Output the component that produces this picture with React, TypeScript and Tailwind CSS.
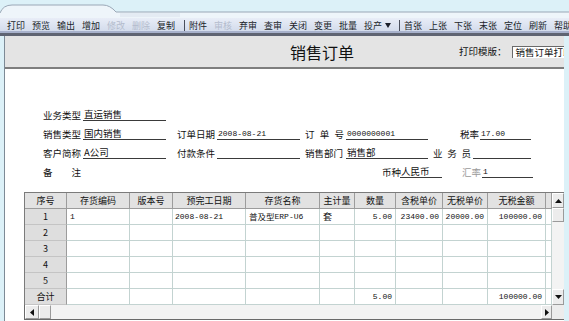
type Tool = { t: string; off?: boolean }

const groupA: Tool[] = [
  { t: '打印' }, { t: '预览' }, { t: '输出' }, { t: '增加' },
  { t: '修改', off: true }, { t: '删除', off: true }, { t: '复制' },
]
const groupB: Tool[] = [
  { t: '附件' }, { t: '审核', off: true }, { t: '弃审' }, { t: '查审' },
  { t: '关闭' }, { t: '变更' }, { t: '批量' },
]
const groupC: Tool[] = ['首张', '上张', '下张', '末张', '定位', '刷新', '帮助'].map((t) => ({ t }))

const cols = [
  { title: '序号', w: 'w-[42px]', align: 'justify-center' },
  { title: '存货编码', w: 'w-[63px]', align: 'justify-start pl-[3px]' },
  { title: '版本号', w: 'w-[43px]', align: 'justify-start pl-[3px]' },
  { title: '预完工日期', w: 'w-[73px]', align: 'justify-start pl-[2px]' },
  { title: '存货名称', w: 'w-[74px]', align: 'justify-start pl-[3px]' },
  { title: '主计量', w: 'w-[35px]', align: 'justify-start pl-[3px]' },
  { title: '数量', w: 'w-[41px]', align: 'justify-end pr-[3px]' },
  { title: '含税单价', w: 'w-[47px]', align: 'justify-end pr-[3px]' },
  { title: '无税单价', w: 'w-[45px]', align: 'justify-end pr-[3px]' },
  { title: '无税金额', w: 'w-[58px]', align: 'justify-end pr-[3px]' },
  { title: '', w: 'w-[6px]', align: 'justify-start' },
]

const rows: string[][] = [
  ['1', '1', '', '2008-08-21', '普及型|ERP-U6', '套', '5.00', '23400.00', '20000.00', '100000.00', ''],
  ['2', '', '', '', '', '', '', '', '', '', ''],
  ['3', '', '', '', '', '', '', '', '', '', ''],
  ['4', '', '', '', '', '', '', '', '', '', ''],
  ['5', '', '', '', '', '', '', '', '', '', ''],
  ['合计', '', '', '', '', '', '5.00', '', '', '100000.00', ''],
]

const cjk = "font-['Noto_Sans_CJK_SC',sans-serif]"
const mono = "font-['Liberation_Mono','Noto_Sans_CJK_SC',monospace]"

function ToolItem({ item }: { item: Tool }) {
  return (
    <span className={`w-[25px] shrink-0 ${item.off ? 'text-[#b4bccd]' : 'text-[#1b1f2a]'}`}>{item.t}</span>
  )
}

function Sep() {
  return <span className="ml-[2px] mr-[4px] h-[11px] w-px shrink-0 bg-[#4a4f5c]" />
}

function Label({ chars, w = 'w-[40px]', gray }: { chars: string[]; w?: string; gray?: boolean }) {
  return (
    <span className={`${w} shrink-0 pr-[2px] ${gray ? 'text-[#9a9a9a]' : 'text-[#111]'}`}>
      <span className="flex justify-between">
        {chars.map((c, i) => (
          <span key={i}>{c}</span>
        ))}
      </span>
    </span>
  )
}

function Field({ w, value, isNum }: { w: string; value?: string; isNum?: boolean }) {
  return (
    <span
      className={`${w} shrink-0 h-[12px] border-b border-[#3a3a3a] leading-[11px] pl-[1px] text-[#111] ${
        isNum ? `${mono} text-[8px]` : 'text-[9.5px]'
      }`}
    >
      {value}
    </span>
  )
}

function Arrow({ dir }: { dir: 'up' | 'down' | 'left' | 'right' }) {
  const pts = {
    up: '0,4 3.5,0 7,4',
    down: '0,0 3.5,4 7,0',
    left: '4,0 0,3.5 4,7',
    right: '0,0 4,3.5 0,7',
  }[dir]
  const vert = dir === 'up' || dir === 'down'
  return (
    <svg width={vert ? 7 : 4} height={vert ? 4 : 7} viewBox={vert ? '0 0 7 4' : '0 0 4 7'}>
      <polygon points={pts} fill="#111" />
    </svg>
  )
}

function Btn({ className, children }: { className: string; children?: React.ReactNode }) {
  return (
    <div
      className={`${className} flex shrink-0 items-center justify-center border border-t-white border-l-white border-r-[#9a9a9a] border-b-[#9a9a9a] bg-[#ececec]`}
    >
      {children}
    </div>
  )
}

function Cell({ col, value, header, rowHead }: { col: (typeof cols)[number]; value: string; header?: boolean; rowHead?: boolean }) {
  let tone = 'bg-white border-r-[#c3d3d1] border-b-[#c3d3d1]'
  if (header) tone = 'bg-[#e2e2e2] border-r-[#9c9c9c] border-b-[#9c9c9c]'
  else if (rowHead) tone = 'bg-[#dedede] border-r-[#9c9c9c] border-b-[#c4c4c4]'
  const isNum = !header && /^[0-9.\-]+$/.test(value)
  let content: React.ReactNode = value
  if (value.includes('|')) {
    const [a, b] = value.split('|')
    content = (
      <>
        <span className={`${cjk} text-[8.5px]`}>{a}</span>
        <span className={`${mono} text-[8px]`}>{b}</span>
      </>
    )
  }
  return (
    <div
      className={`${col.w} ${header ? 'justify-center' : col.align} ${tone} flex h-[16px] shrink-0 items-center overflow-hidden whitespace-nowrap border-r border-b text-[#111] ${
        isNum && !rowHead ? `${mono} text-[8px]` : `${cjk} text-[9px]`
      }`}
    >
      {content}
    </div>
  )
}

export default function App() {
  return (
    <div className={`relative h-[321px] w-[569px] overflow-hidden bg-[#dcf1f8] ${cjk}`}>
      {/* top tab strip */}
      <div className="h-[18px]">
        <svg width="569" height="18" viewBox="0 0 569 18">
          <path d="M0 18 L0 13 Q3 5 12 5 L103 5 Q110 5 116 12 L569 12 L569 18 Z" fill="#eef5fa" />
          <path d="M0 13 Q3 5 12 5 L103 5 Q110 5 116 12 L569 12" fill="none" stroke="#9aa7b6" strokeWidth="1" />
          <rect x="120" y="13" width="60" height="4" fill="#e4ebf3" />
        </svg>
      </div>

      {/* toolbar */}
      <div className="flex h-[13px] items-center bg-gradient-to-b from-[#e8edf7] to-[#d4dcec] pl-[7px] pt-[2px] text-[9px] leading-[11px] whitespace-nowrap">
        {groupA.map((it) => (
          <ToolItem key={it.t} item={it} />
        ))}
        <Sep />
        {groupB.map((it) => (
          <ToolItem key={it.t} item={it} />
        ))}
        <span className="flex w-[33px] shrink-0 items-center gap-[3px] text-[#1b1f2a]">
          投产
          <svg width="6" height="5" viewBox="0 0 6 5">
            <polygon points="0,0 6,0 3,5" fill="#1b1f2a" />
          </svg>
        </span>
        <Sep />
        {groupC.map((it) => (
          <ToolItem key={it.t} item={it} />
        ))}
      </div>
      <div className="h-[2px] bg-[#a7b1cb]" />
      <div className="h-[3px] bg-[#5f6472]" />

      {/* main frame */}
      <div className="ml-[4px] h-[285px] w-[560px] overflow-hidden border-l border-[#7d8a96] bg-white">
        {/* title panel */}
        <div className="flex h-[33px] items-center border-b-2 border-[#7e7e7e] bg-[#e4e4e4] whitespace-nowrap">
          <span className="ml-[285px] w-[64px] shrink-0 text-[16px] leading-[20px] text-[#111]">销售订单</span>
          <span className="ml-[105px] shrink-0 text-[9.5px] text-[#111]">打印模版：</span>
          <span className="ml-[5px] h-[12px] w-[70px] shrink-0 border-t border-l border-t-[#6a6a6a] border-l-[#6a6a6a] bg-white pl-[3px] text-[9.5px] leading-[11px] text-[#111]">
            销售订单打印
          </span>
        </div>

        {/* header form */}
        <div className="pt-[36px] pl-[38px] text-[9.5px] leading-[12px] whitespace-nowrap">
          <div className="flex h-[19px] items-center">
            <Label chars={['业务类型']} />
            <Field w="w-[83px]" value="直运销售" />
          </div>
          <div className="flex h-[19px] items-center">
            <Label chars={['销售类型']} />
            <Field w="w-[83px]" value="国内销售" />
            <span className="w-[11px] shrink-0" />
            <Label chars={['订单日期']} />
            <Field w="w-[83px]" value="2008-08-21" isNum />
            <span className="w-[5px] shrink-0" />
            <Label chars={['订', '单', '号']} w="w-[41px]" />
            <Field w="w-[82px]" value="0000000001" isNum />
            <span className="w-[32px] shrink-0" />
            <Label chars={['税率']} w="w-[20px]" />
            <Field w="w-[51px]" value="17.00" isNum />
          </div>
          <div className="flex h-[19px] items-center">
            <Label chars={['客户简称']} />
            <Field w="w-[83px]" value="A公司" />
            <span className="w-[11px] shrink-0" />
            <Label chars={['付款条件']} />
            <Field w="w-[83px]" />
            <span className="w-[5px] shrink-0" />
            <Label chars={['销售部门']} w="w-[41px]" />
            <Field w="w-[82px]" value="销售部" />
            <span className="w-[5px] shrink-0" />
            <Label chars={['业', '务', '员']} />
            <Field w="w-[58px]" />
          </div>
          <div className="flex h-[19px] items-center">
            <Label chars={['备', '注']} />
            <span className="w-[299px] shrink-0" />
            <Label chars={['币种']} w="w-[18px]" />
            <Field w="w-[42px]" value="人民币" />
            <span className="w-[20px] shrink-0" />
            <Label chars={['汇率']} w="w-[20px]" gray />
            <Field w="w-[51px]" value="1" isNum />
          </div>
        </div>

        {/* detail grid */}
        <div className="mt-[11px] ml-[19px] w-[540px] border-t border-[#7b7b7b]">
          <div className="flex">
            <div className="w-[528px] shrink-0 border-l border-[#7b7b7b]">
              <div className="flex">
                {cols.map((c, i) => (
                  <Cell key={i} col={c} value={c.title} header />
                ))}
              </div>
              {rows.map((r, ri) => (
                <div key={ri} className="flex">
                  {cols.map((c, ci) => (
                    <Cell key={ci} col={c} value={r[ci]} rowHead={ci === 0} />
                  ))}
                </div>
              ))}
            </div>
            {/* vertical scrollbar */}
            <div className="flex h-[112px] w-[12px] shrink-0 flex-col bg-[#f3f3f3]">
              <Btn className="h-[15px] w-[12px]">
                <Arrow dir="up" />
              </Btn>
              <Btn className="h-[14px] w-[12px]" />
              <div className="flex-1" />
              <Btn className="h-[16px] w-[12px]">
                <Arrow dir="down" />
              </Btn>
            </div>
          </div>
          {/* horizontal scrollbar */}
          <div className="flex h-[15px] border-b border-l border-[#6a6a6a] bg-[#f3f3f3]">
            <Btn className="h-[14px] w-[14px]">
              <Arrow dir="left" />
            </Btn>
            <Btn className="h-[14px] w-[12px]" />
            <div className="flex-1" />
            <Btn className="h-[14px] w-[11px]">
              <Arrow dir="right" />
            </Btn>
            <div className="w-[12px] shrink-0 bg-[#ececec]" />
          </div>
        </div>
      </div>
    </div>
  )
}
